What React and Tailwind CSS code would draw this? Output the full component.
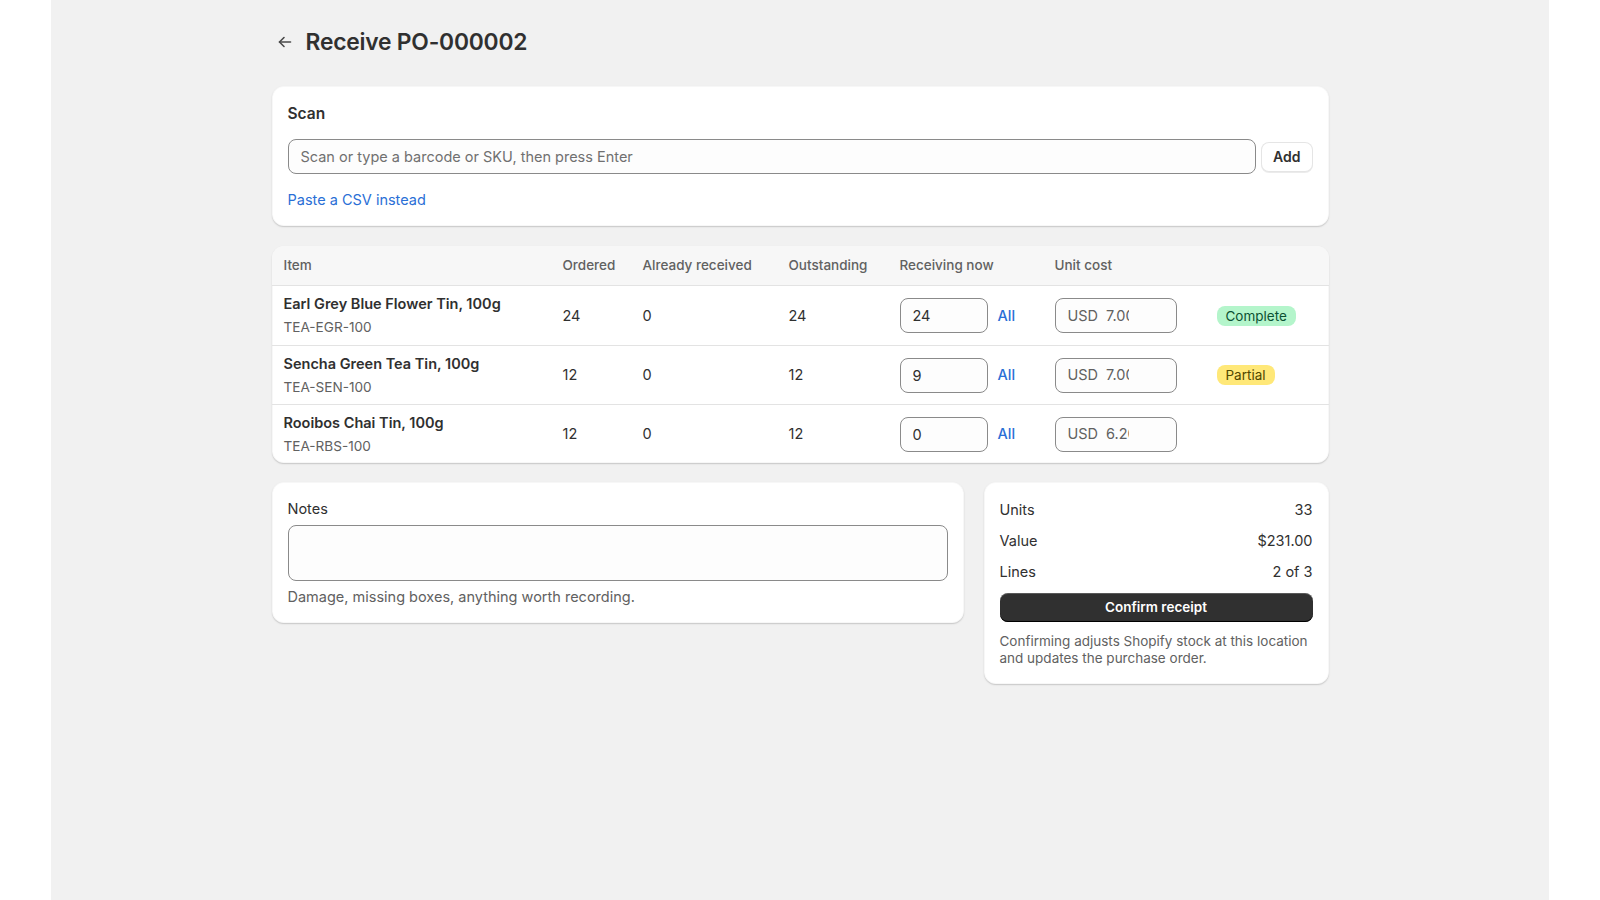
import React from 'react';

const rows = [
  { name: 'Earl Grey Blue Flower Tin, 100g', sku: 'TEA-EGR-100', ordered: 24, received: 0, outstanding: 24, now: '24', cost: '7.00', status: 'complete' },
  { name: 'Sencha Green Tea Tin, 100g', sku: 'TEA-SEN-100', ordered: 12, received: 0, outstanding: 12, now: '9', cost: '7.00', status: 'partial' },
  { name: 'Rooibos Chai Tin, 100g', sku: 'TEA-RBS-100', ordered: 12, received: 0, outstanding: 12, now: '0', cost: '6.20', status: null },
];

const cols = 'grid grid-cols-[279px_80px_146px_111px_155px_162px_124px]';

const Badge = ({ status }) => {
  if (status === 'complete') {
    return <span className="inline-flex items-center h-[20px] px-[9px] rounded-lg bg-[#b4f5cb] text-[#0c5132] text-[13.5px]">Complete</span>;
  }
  if (status === 'partial') {
    return <span className="inline-flex items-center h-[20px] px-[9px] rounded-lg bg-[#ffe878] text-[#4f4700] text-[13.5px]">Partial</span>;
  }
  return null;
};

const Card = ({ className = '', children }) => (
  <div className={`bg-white rounded-xl shadow-[0_1px_0_0_rgba(26,26,26,0.07),0_1px_2px_0_rgba(0,0,0,0.12),inset_0_0_0_1px_rgba(0,0,0,0.03)] ${className}`}>
    {children}
  </div>
);

export default function App() {
  return (
    <div className="min-h-screen bg-white text-[#303030] text-[14.5px]" style={{ fontFamily: 'Inter, "Noto Sans", sans-serif' }}>
      <div className="w-[1498px] min-h-[900px] mx-auto bg-[#f1f1f1]">
        <div className="w-[1057px] mx-auto pt-[26px] pb-10">
          {/* Header */}
          <div className="flex items-center h-[32px] mb-[28px]">
            <button className="w-[28px] h-[28px] flex items-center justify-start pl-[5px] text-[#4a4a4a]">
              <svg width="16" height="16" viewBox="0 0 16 16" fill="none" stroke="currentColor" strokeWidth="1.6" strokeLinecap="round" strokeLinejoin="round">
                <path d="M13.5 8H2.5" />
                <path d="M7 3.5L2.5 8 7 12.5" />
              </svg>
            </button>
            <h1 className="text-[22.8px] leading-8 font-semibold tracking-[-0.2px] ml-[6px]">Receive PO-000002</h1>
          </div>

          {/* Scan */}
          <Card className="px-4 pt-[18px] pb-4">
            <div className="text-[15.5px] leading-5 font-semibold mb-[15px]">Scan</div>
            <div className="flex items-center gap-[5px]">
              <input
                className="flex-1 h-[35px] rounded-lg border border-[#8a8a8a] bg-[#fdfdfd] px-3 text-[14.5px] placeholder:text-[#707070] outline-none"
                placeholder="Scan or type a barcode or SKU, then press Enter"
              />
              <button className="h-[30px] px-[12px] rounded-lg bg-white text-[14px] font-semibold shadow-[0_1px_0_0_rgba(0,0,0,0.08),inset_0_0_0_1px_rgba(0,0,0,0.1)]">
                Add
              </button>
            </div>
            <a href="#" className="block mt-[16px] leading-5 text-[14.5px] text-[#2a6fd6]">Paste a CSV instead</a>
          </Card>

          {/* Lines table */}
          <Card className="mt-5 overflow-hidden">
            <div className={`${cols} h-[40px] items-center bg-[#f7f7f7] border-b border-[#e3e3e3] text-[13.5px] font-medium text-[#616161]`}>
              <div className="px-3">Item</div>
              <div className="px-3">Ordered</div>
              <div className="px-3">Already received</div>
              <div className="px-3">Outstanding</div>
              <div className="px-3">Receiving now</div>
              <div className="px-3">Unit cost</div>
              <div className="px-3"></div>
            </div>
            {rows.map((r, i) => (
              <div key={r.sku} className={`${cols} h-[59px] items-center ${i > 0 ? 'border-t border-[#e3e3e3]' : ''}`}>
                <div className="px-3">
                  <div className="font-semibold leading-5">{r.name}</div>
                  <div className="text-[13.6px] leading-5 mt-[3px] text-[#616161]">{r.sku}</div>
                </div>
                <div className="px-3">{r.ordered}</div>
                <div className="px-3">{r.received}</div>
                <div className="px-3">{r.outstanding}</div>
                <div className="px-3 flex items-center gap-[10px]">
                  <input
                    className="w-[88px] h-[35px] rounded-lg border border-[#8a8a8a] bg-[#fdfdfd] px-3 outline-none"
                    defaultValue={r.now}
                  />
                  <a href="#" className="text-[#2a6fd6] font-medium">All</a>
                </div>
                <div className="px-3">
                  <div className="w-[122px] h-[35px] rounded-lg border border-[#8a8a8a] bg-[#fdfdfd] flex items-center pl-3 overflow-hidden text-[#616161]">
                    <span>USD</span>
                    <input className="ml-[8px] w-[23px] bg-transparent outline-none text-[#616161]" defaultValue={r.cost} />
                  </div>
                </div>
                <div className="px-3">
                  <Badge status={r.status} />
                </div>
              </div>
            ))}
          </Card>

          {/* Notes + summary */}
          <div className="mt-[19px] grid grid-cols-[692px_345px] gap-5 items-start">
            <Card className="px-4 pt-[17px] pb-[16px]">
              <div className="leading-5 mb-[6px]">Notes</div>
              <textarea className="block w-full h-[56px] rounded-lg border border-[#8a8a8a] bg-[#fdfdfd] px-3 py-2 outline-none resize-none" />
              <div className="mt-[6px] leading-5 text-[#616161]">Damage, missing boxes, anything worth recording.</div>
            </Card>
            <Card className="px-4 pt-[18px] pb-[17px]">
              <div className="flex flex-col gap-[11px]">
                <div className="flex justify-between leading-5"><span>Units</span><span>33</span></div>
                <div className="flex justify-between leading-5"><span>Value</span><span>$231.00</span></div>
                <div className="flex justify-between leading-5"><span>Lines</span><span>2 of 3</span></div>
                <button className="h-[29px] w-full rounded-lg bg-[#303030] text-white text-[13.5px] font-semibold shadow-[inset_0_-1px_0_0_#000,inset_0_1px_0_0_rgba(255,255,255,0.2)]">
                  Confirm receipt
                </button>
                <p className="text-[13.5px] leading-[17px] text-[#616161]">
                  Confirming adjusts Shopify stock at this location and updates the purchase order.
                </p>
              </div>
            </Card>
          </div>
        </div>
      </div>
    </div>
  );
}
